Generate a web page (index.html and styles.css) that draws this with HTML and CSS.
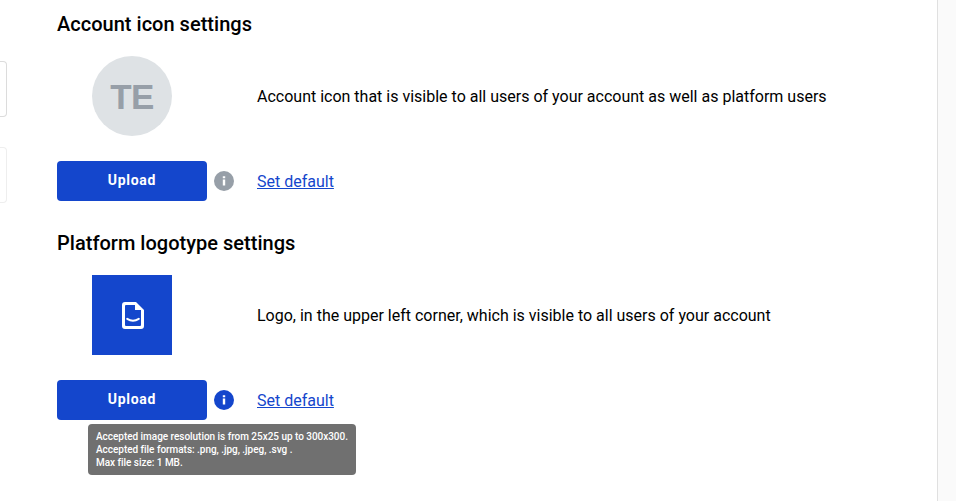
FILE: index.html
```html
<!DOCTYPE html>
<html lang="en">
<head>
<meta charset="utf-8">
<title>Account settings</title>
<link rel="stylesheet" href="styles.css">
</head>
<body>
<div class="page">
  <aside class="side"><div class="side-card"></div><div class="side-card faint"></div></aside>
  <main class="content">
    <section class="setting">
      <h2>Account icon settings</h2>
      <div class="preview">
        <div class="thumb"><div class="avatar">TE</div></div>
        <p>Account icon that is visible to all users of your account as well as platform users</p>
      </div>
      <div class="actions">
        <button class="upload">Upload</button>
        <svg class="info muted" viewBox="0 0 20 20"><circle cx="10" cy="10" r="10"/><path d="M8.800 5.200h2.400v2H8.800zM8.800 8.500h2.400v6H8.800z" fill="#fff"/></svg>
        <a href="#">Set default</a>
      </div>
    </section>
    <section class="setting">
      <h2>Platform logotype settings</h2>
      <div class="preview">
        <div class="thumb"><div class="logo"><svg viewBox="0 0 22 27"><path fill="#fff" fill-rule="evenodd" d="M3 0h11l8 8v16q0 3-3 3H3q-3 0-3-3V3q0-3 3-3zM4 3q-1 0-1 1v19q0 1 1 1h14q1 0 1-1V8h-6V3z"/><path d="M5.200 16.800q5.800 3.700 11.600 0" fill="none" stroke="#fff" stroke-width="2" stroke-linecap="round"/></svg></div></div>
        <p>Logo, in the upper left corner, which is visible to all users of your account</p>
      </div>
      <div class="actions">
        <button class="upload">Upload</button>
        <svg class="info" viewBox="0 0 20 20"><circle cx="10" cy="10" r="10"/><path d="M8.800 5.200h2.400v2H8.800zM8.800 8.500h2.400v6H8.800z" fill="#fff"/></svg>
        <a href="#">Set default</a>
        <div class="tooltip">Accepted image resolution is from 25x25 up to 300x300.<br>Accepted file formats: .png, .jpg, .jpeg, .svg .<br>Max file size: 1 MB.</div>
      </div>
    </section>
  </main>
  <div class="gutter"></div>
</div>
</body>
</html>
```
FILE: styles.css
```css
* { box-sizing: border-box; }
body { margin: 0; background: #fff; color: #000; font: 16px/24px Roboto, sans-serif; }
.page { display: flex; height: 501px; overflow: hidden; }
.side { width: 7px; padding-top: 61px; }
.side-card { height: 56px; margin-bottom: 30px; border: 1px solid #dcdcdc; border-left: 0; border-radius: 0 4px 4px 0; }
.side-card.faint { border-color: #eee; }
.content { flex: 1; padding: 12px 0 0 50px; }
.gutter { width: 19px; background: #fafafa; border-left: 1px solid #e0e0e0; }
.setting { height: 219px; }
h2 { margin: 0 0 20px; font-size: 20px; line-height: 24px; font-weight: 500; letter-spacing: .02px; }
.preview { display: flex; align-items: center; height: 80px; }
.thumb { width: 150px; margin-right: 50px; display: flex; justify-content: center; }
.avatar, .logo { width: 80px; height: 80px; display: flex; align-items: center; justify-content: center; }
.avatar { padding-top: 2px; border-radius: 50%; background: #dee2e5; color: #979fa8; font: bold 35px "Liberation Sans", sans-serif; letter-spacing: -.6px; }
.logo { padding-top: 1px; background: #1446cc; }
.logo svg { width: 22px; height: 27px; margin-left: 1px; }
p { margin: 0; padding-top: 2px; white-space: nowrap; }
.actions { position: relative; display: flex; align-items: center; height: 40px; margin-top: 25px; }
.upload { width: 150px; height: 40px; padding: 0 0 2px; border: 0; border-radius: 4px; background: #1446cc; color: #fff; font: 700 14px Roboto, sans-serif; letter-spacing: .7px; }
.info { width: 20px; height: 20px; margin: 0 23px 0 7px; fill: #1446cc; }
.info.muted { fill: #979fa8; }
a { padding-top: 2px; color: #1446cc; text-decoration: underline; }
.tooltip { position: absolute; left: 31px; top: 44px; width: 268px; height: 51px; padding: 6px 8px; border-radius: 4px; background: #707070; color: #fff; font: 500 10px/13px Roboto, sans-serif; letter-spacing: -.03px; white-space: nowrap; }
```
